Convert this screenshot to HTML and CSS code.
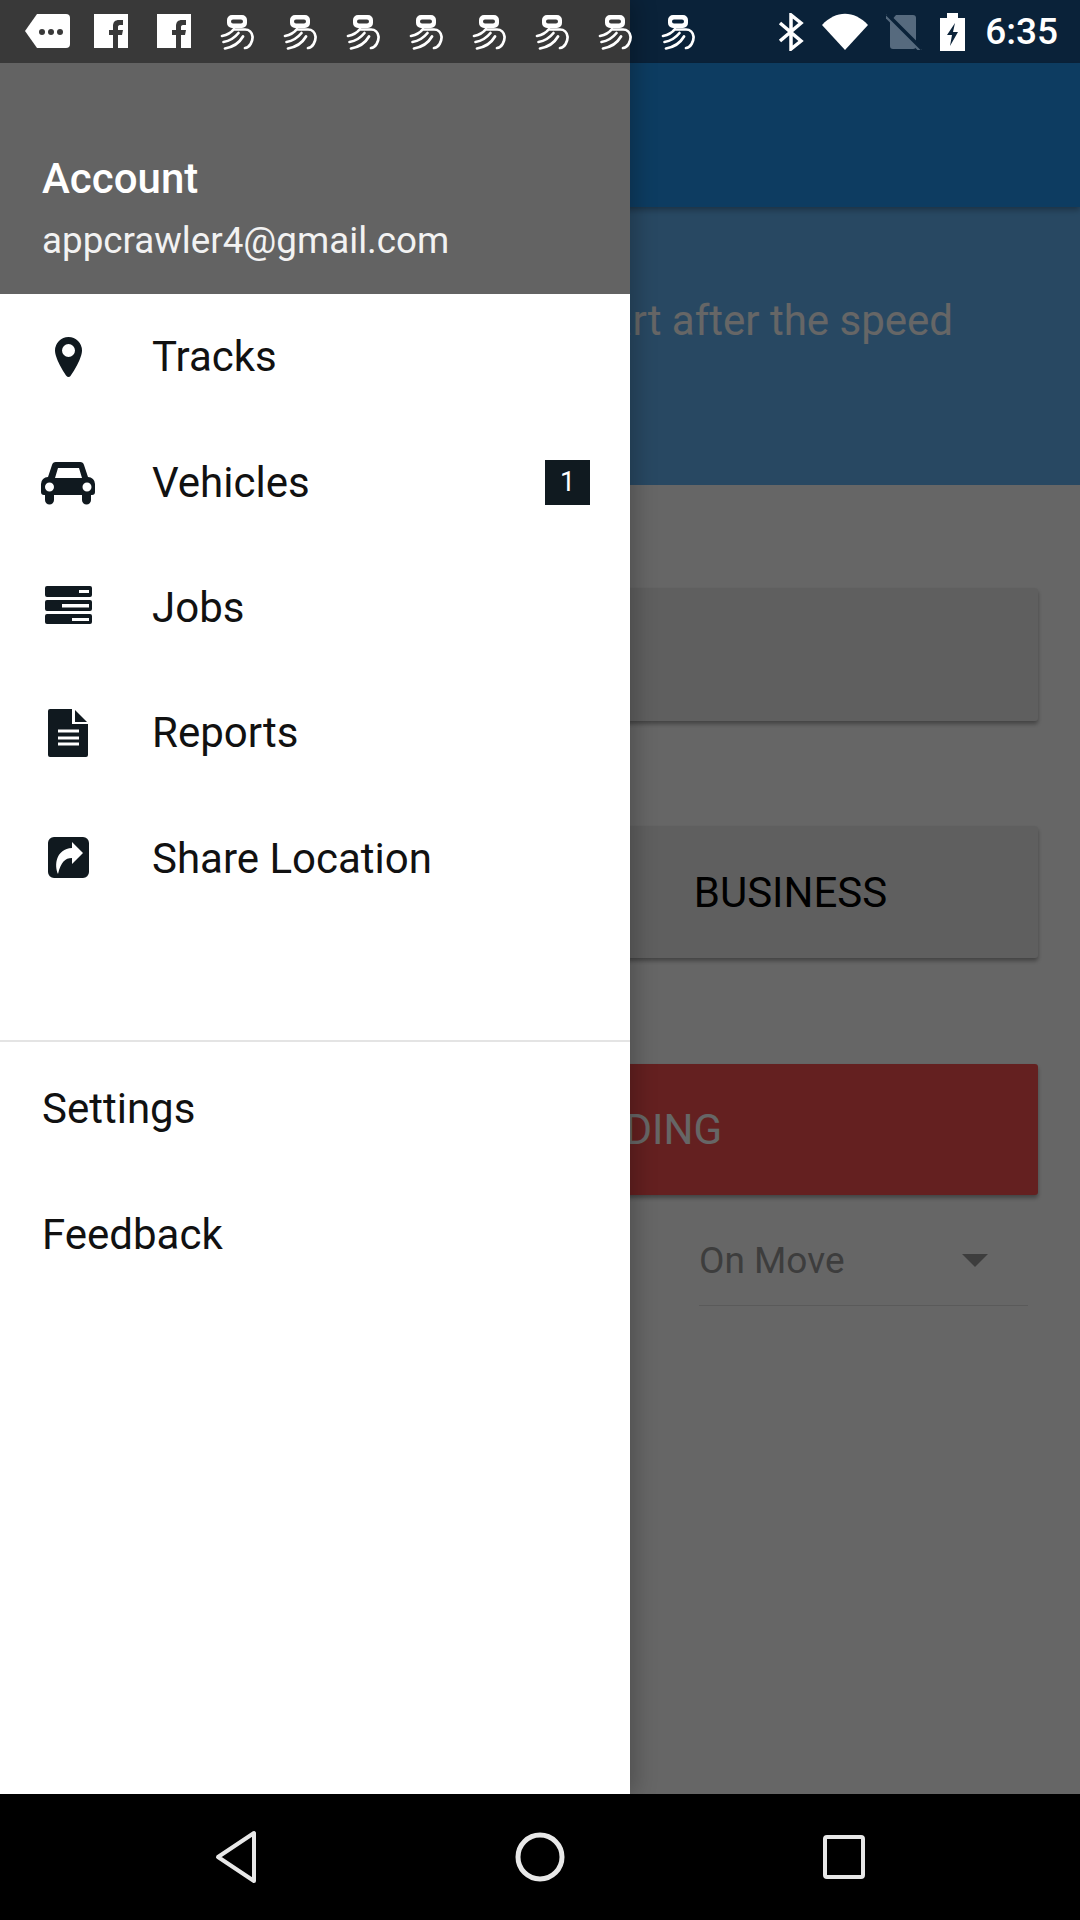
FILE: index.html
```html
<!DOCTYPE html>
<html lang="en">
<head>
  <meta charset="UTF-8">
  <meta name="viewport" content="width=device-width, initial-scale=1.0">
  <title>Tracker</title>
  <link rel="stylesheet" href="styles.css">
</head>
<body>
  <svg class="defs" width="0" height="0">
    <symbol id="yi" viewBox="0 0 34 36">
      <path fill="#fff" fill-rule="evenodd" d="M12 1H22A5 5 0 0 1 27 6V9A5 5 0 0 1 22 14H12A5 5 0 0 1 7 9V6A5 5 0 0 1 12 1zM13 5.500A2 2 0 0 0 13 9.500H21A2 2 0 0 0 21 5.500z"/>
      <g fill="none" stroke="#fff" stroke-width="2.700" stroke-linecap="round" stroke-linejoin="round">
        <path d="M2 22c5-1 9-3 12-7"/>
        <path d="M3.500 28c6-1 11-4 15-9"/>
        <path d="M5 34.500c8-1.500 14-5 18-12"/>
        <path d="M15 15.500h10c4 0 7 3 7.500 7 .5 5-3 11-7.500 11.500"/>
      </g>
    </symbol>
    <symbol id="fb" viewBox="0 0 34 34">
      <path fill="#fff" fill-rule="evenodd" d="M0 0H34V34H0Z M19 34V21H15V16H19V12C19 8 21 6 25 6H29V11H26C24.500 11 24 12 24 13V16H29L28 21H24V34Z"/>
    </symbol>
  </svg>

  <div class="screen">
    <div class="app">
      <div class="app-status"></div>
      <header class="appbar"></header>
      <section class="notice">
        <p class="notice-text">Tracking will start after the speed</p>
      </section>
      <div class="card"></div>
      <div class="card card-split">
        <span></span>
        <span>BUSINESS</span>
      </div>
      <div class="card card-red">START RECORDING</div>
      <div class="select">
        <span>On Move</span>
        <i class="caret"></i>
      </div>
    </div>

    <div class="scrim"></div>

    <aside class="drawer">
      <div class="drawer-status"></div>
      <div class="drawer-head">
        <div class="account">Account</div>
        <div class="email">appcrawler4@gmail.com</div>
      </div>
      <nav class="menu">
        <a class="menu-row">
          <svg class="menu-icon" viewBox="0 0 54 54"><path fill-rule="evenodd" d="M27.500 7a13.500 13.500 0 0 1 13.500 13.500c0 8-9 22-11.500 25.500a2.500 2.500 0 0 1-4 0c-2.500-3.500-11.500-17.500-11.500-25.500A13.500 13.500 0 0 1 27.500 7zM27.500 14a6.500 6.500 0 1 0 0 13a6.500 6.500 0 0 0 0-13z"/></svg>
          <span>Tracks</span>
        </a>
        <a class="menu-row">
          <svg class="menu-icon" viewBox="0 0 54 54"><path fill-rule="evenodd" d="M15 7H39a4 4 0 0 1 4 3L47 22a7 7 0 0 1 7 7V37a3 3 0 0 1-3 3H50V45a4.500 4.500 0 0 1-9 0V40H13V45a4.500 4.500 0 0 1-9 0V40H3a3 3 0 0 1-3-3V29a7 7 0 0 1 7-7L11 10a4 4 0 0 1 4-3zM17 13L14 23H41L38 13zM8.500 27.500a4.500 4.500 0 1 0 0 9a4.500 4.500 0 0 0 0-9zM46 27.500a4.500 4.500 0 1 0 0 9a4.500 4.500 0 0 0 0-9z"/></svg>
          <span>Vehicles</span>
          <b class="badge">1</b>
        </a>
        <a class="menu-row">
          <svg class="menu-icon" viewBox="0 0 54 54"><path fill-rule="evenodd" d="M6 6H49a2 2 0 0 1 2 2V15a2 2 0 0 1-2 2H6a2 2 0 0 1-2-2V8a2 2 0 0 1 2-2zM38 10V13H48V10zM6 20H49a2 2 0 0 1 2 2V29a2 2 0 0 1-2 2H6a2 2 0 0 1-2-2V22a2 2 0 0 1 2-2zM21 24V27.500H48V24zM6 34H49a2 2 0 0 1 2 2V42a2 2 0 0 1-2 2H6a2 2 0 0 1-2-2V36a2 2 0 0 1 2-2zM31 38V41H48V38z"/></svg>
          <span>Jobs</span>
        </a>
        <a class="menu-row">
          <svg class="menu-icon" viewBox="0 0 54 54"><path fill-rule="evenodd" d="M9 3H31V18H47V49a2 2 0 0 1-2 2H9a2 2 0 0 1-2-2V5a2 2 0 0 1 2-2zM17 23.500V26.500H38V23.500zM17 30.500V33.500H38V30.500zM17 36.500V39.500H38V36.500z"/><path d="M34 4L46 16H34z"/></svg>
          <span>Reports</span>
        </a>
        <a class="menu-row">
          <svg class="menu-icon" viewBox="0 0 54 54"><path fill-rule="evenodd" d="M13 6H42a6 6 0 0 1 6 6V41a6 6 0 0 1-6 6H13a6 6 0 0 1-6-6V12a6 6 0 0 1 6-6zM31 11V17C15 18 13 34 17 43C20 31 24 27 31 27V33L42 22z"/></svg>
          <span>Share Location</span>
        </a>
      </nav>
      <div class="drawer-foot">
        <a class="foot-row">Settings</a>
        <a class="foot-row">Feedback</a>
      </div>
    </aside>

    <div class="statusbar">
      <div class="notifs">
        <span class="slot">
          <svg width="46" height="34" viewBox="0 0 46 34"><path fill="#fff" d="M12 0H41a4 4 0 0 1 4 4V30a4 4 0 0 1-4 4H12L0 17z"/><g fill="#393939"><circle cx="17" cy="18" r="3"/><circle cx="26" cy="18" r="3"/><circle cx="35" cy="18" r="3"/></g></svg>
        </span>
        <span class="slot"><svg width="34" height="34"><use href="#fb"/></svg></span>
        <span class="slot"><svg width="34" height="34"><use href="#fb"/></svg></span>
        <span class="slot"><svg width="34" height="36"><use href="#yi"/></svg></span>
        <span class="slot"><svg width="34" height="36"><use href="#yi"/></svg></span>
        <span class="slot"><svg width="34" height="36"><use href="#yi"/></svg></span>
        <span class="slot"><svg width="34" height="36"><use href="#yi"/></svg></span>
        <span class="slot"><svg width="34" height="36"><use href="#yi"/></svg></span>
        <span class="slot"><svg width="34" height="36"><use href="#yi"/></svg></span>
        <span class="slot"><svg width="34" height="36"><use href="#yi"/></svg></span>
        <span class="slot"><svg width="34" height="36"><use href="#yi"/></svg></span>
      </div>
      <div class="sys">
        <svg width="26" height="38" viewBox="0 0 26 38"><path fill="none" stroke="#fff" stroke-width="3.500" d="M2 10L23 28L13 36V2L23 10L2 28"/></svg>
        <svg width="46" height="38" viewBox="0 0 46 38"><path fill="#fff" d="M0 12C14-3 32-3 46 12L23 37z"/></svg>
        <svg width="36" height="36" viewBox="0 0 36 36"><path fill="#566a7e" d="M10 1H27a3 3 0 0 1 3 3V32a3 3 0 0 1-3 3H7a3 3 0 0 1-3-3V8z"/><path d="M0 1L35 36" stroke="#566a7e" stroke-width="5"/><path d="M1 0L36 35" stroke="#0a2239" stroke-width="3.500"/></svg>
        <svg width="25" height="38" viewBox="0 0 25 38"><path fill="#fff" fill-rule="evenodd" d="M7 0H18V5H25V38H0V5H7zM15 10L7 22H12L10 33L18 19H13z"/></svg>
        <span class="clock">6:35</span>
      </div>
    </div>
  </div>

  <footer class="navbar">
    <span class="nav-slot"><svg width="44" height="54" viewBox="0 0 44 54"><path fill="none" stroke="#e8e8e8" stroke-width="4" stroke-linejoin="round" d="M40 3V51L4 27z"/></svg></span>
    <span class="nav-slot"><svg width="54" height="54" viewBox="0 0 54 54"><circle cx="27" cy="27" r="22" fill="none" stroke="#e8e8e8" stroke-width="5"/></svg></span>
    <span class="nav-slot"><svg width="44" height="44" viewBox="0 0 44 44"><rect x="3" y="2" width="38" height="40" rx="2" fill="none" stroke="#e8e8e8" stroke-width="4"/></svg></span>
  </footer>
</body>
</html>
```

FILE: styles.css
```css
* {
  box-sizing: border-box;
}

body {
  margin: 0;
  width: 1080px;
  height: 1920px;
  overflow: hidden;
  font-family: Roboto, "Noto Sans", sans-serif;
  background: #000;
}

.defs {
  position: absolute;
}

.screen {
  position: relative;
  height: 1794px;
  overflow: hidden;
  background: #fff;
}

/* app under the drawer */
.app {
  display: flex;
  flex-direction: column;
  height: 100%;
}

.app-status {
  height: 63px;
  background: #1a5690;
}

.appbar {
  position: relative;
  height: 144px;
  background: #2196f3;
  box-shadow: 0 3px 6px rgba(0, 0, 0, 0.3);
}

.notice {
  height: 278px;
  padding: 91px 127px 0 0;
  background: #64b5f6;
}

.notice-text {
  margin: 0;
  text-align: right;
  white-space: nowrap;
  font-size: 42px;
  line-height: 46px;
  color: #fff;
}

.card {
  display: flex;
  flex: none;
  align-items: center;
  justify-content: center;
  height: 133px;
  margin: 103px 42px 0;
  border-radius: 3px;
  background: #eee;
  box-shadow: 0 3px 4px rgba(0, 0, 0, 0.35);
  font-size: 42px;
}

.card-split {
  height: 132px;
  margin-top: 105px;
  padding-left: 6px;
  color: #000;
}

.card-split span {
  flex: 1;
  text-align: center;
}

.card-red {
  height: 131px;
  margin-top: 106px;
  background: #fb5250;
  color: #fff;
}

.select {
  display: flex;
  align-items: center;
  justify-content: space-between;
  height: 79px;
  margin: 32px 52px 0 699px;
  padding: 0 40px 11px 0;
  border-bottom: 1px solid rgba(0, 0, 0, 0.12);
  font-size: 37px;
  color: #999;
}

.caret {
  border-left: 13px solid transparent;
  border-right: 13px solid transparent;
  border-top: 13px solid #999;
}

.scrim {
  position: absolute;
  inset: 0;
  background: rgba(0, 0, 0, 0.6);
}

/* drawer */
.drawer {
  position: absolute;
  top: 0;
  left: 0;
  bottom: 0;
  width: 630px;
  background: #fff;
  box-shadow: 6px 0 20px rgba(0, 0, 0, 0.22);
}

.drawer-status {
  height: 63px;
  background: #393939;
}

.drawer-head {
  height: 231px;
  padding: 92px 42px 0;
  background: #636363;
  color: #fff;
}

.account {
  font-size: 42px;
  font-weight: 500;
  line-height: 48px;
}

.email {
  margin-top: 17px;
  font-size: 36.75px;
  line-height: 42px;
  color: #f2f2f2;
}

.menu {
  height: 748px;
  border-bottom: 2px solid #e4e4e4;
}

.menu-row {
  display: flex;
  align-items: center;
  height: 125.4px;
  padding: 0 40px 0 41px;
  font-size: 42px;
  color: #111;
}

.menu-icon {
  flex: none;
  width: 54px;
  height: 54px;
  margin-right: 57px;
  fill: #10191f;
}

.badge {
  display: flex;
  align-items: center;
  justify-content: center;
  width: 45px;
  height: 45px;
  margin-left: auto;
  background: #101a20;
  color: #fff;
  font-size: 27px;
  font-weight: 400;
}

.drawer-foot {
  padding-top: 4px;
}

.foot-row {
  display: flex;
  align-items: center;
  height: 125.4px;
  padding-left: 42px;
  font-size: 42px;
  color: #111;
}

/* status bar sits on top of everything */
.statusbar {
  position: absolute;
  top: 0;
  left: 0;
  right: 0;
  display: flex;
  align-items: center;
  justify-content: space-between;
  height: 63px;
  padding: 0 22px 0 16px;
  color: #fff;
}

.notifs {
  display: flex;
}

.slot {
  display: flex;
  justify-content: center;
  width: 63px;
}

.sys {
  display: flex;
  align-items: center;
  gap: 18px;
}

.clock {
  margin-left: 2px;
  font-size: 37px;
  font-weight: 500;
}

/* nav */
.navbar {
  display: flex;
  justify-content: center;
  align-items: center;
  height: 126px;
  background: #000;
}

.nav-slot {
  display: flex;
  justify-content: center;
  width: 304px;
}
```
